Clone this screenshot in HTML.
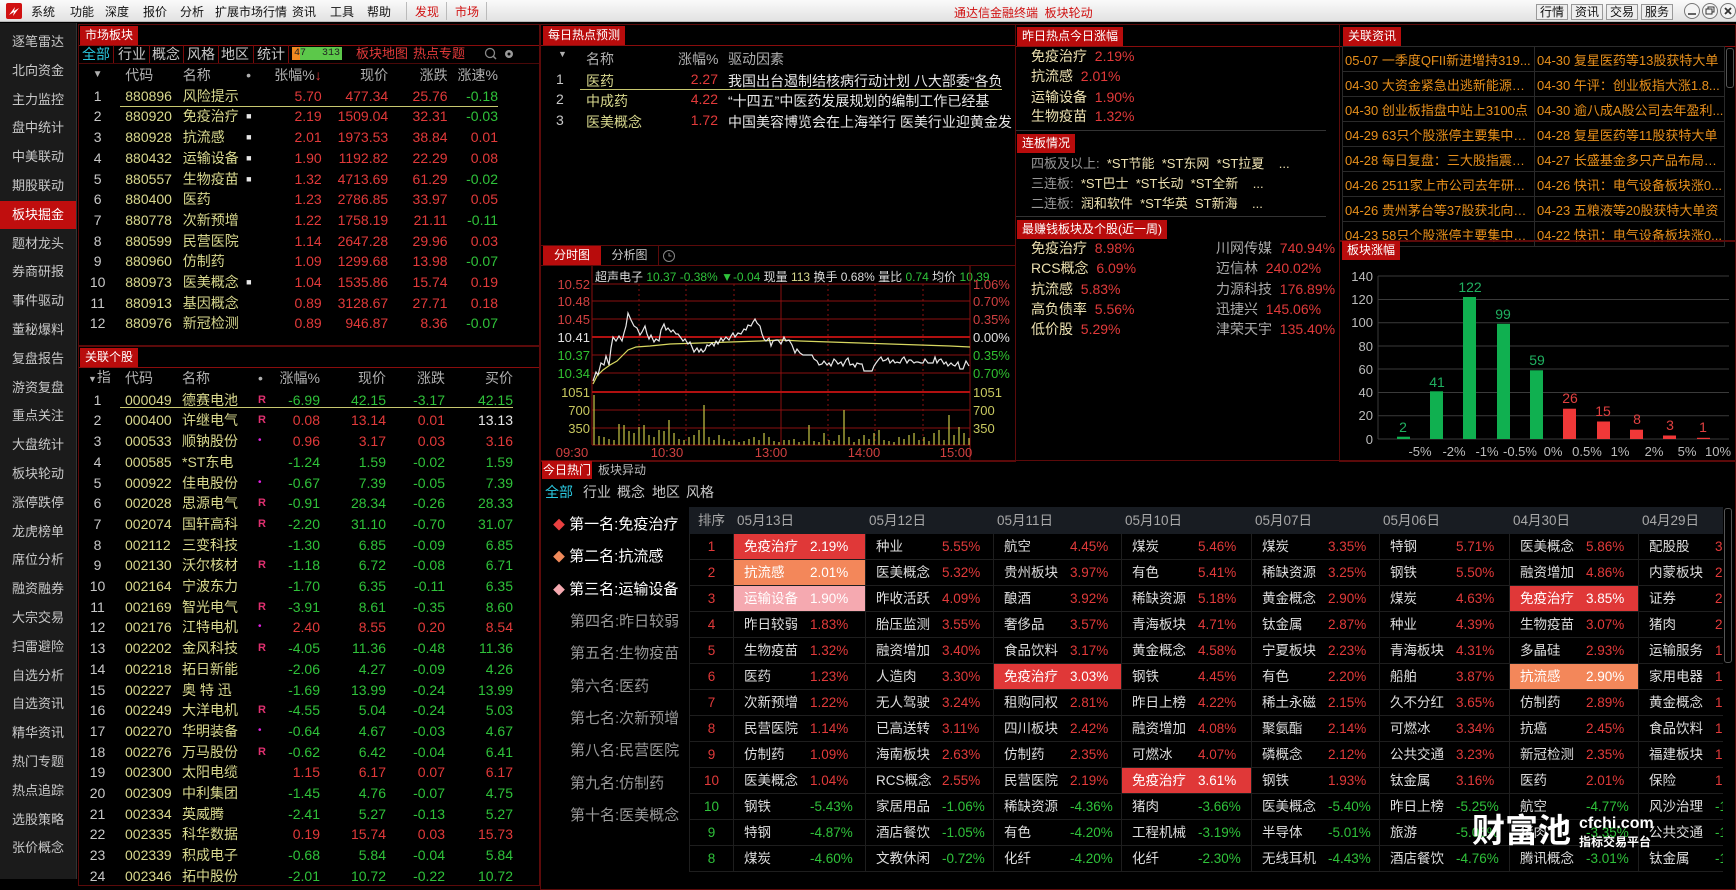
<!DOCTYPE html>
<html><head><meta charset="utf-8">
<style>
*{margin:0;padding:0;box-sizing:border-box}
body{width:1736px;height:879px;overflow:hidden;background:#000;font-family:"Liberation Sans","Noto Sans CJK SC",sans-serif;font-size:14px;color:#c8c8c8;position:relative}
.a{position:absolute;white-space:nowrap}
.r{color:#e23a3a}.g{color:#2fc23a}.k{color:#d8d88e}.w{color:#e8e8e8}.gy{color:#b0b0b0}
.tab{position:absolute;background:#b80c0c;color:#fff;font-size:12px;height:19px;line-height:19px;padding:0 5px}
.pl{position:absolute;border:1px solid #5c0a0a}
table{border-collapse:collapse;table-layout:fixed}
td{white-space:nowrap;overflow:hidden;padding:0}
.mt td{height:20.7px;line-height:20.7px;font-size:14px}
.rt{text-align:right;padding-right:2px}
.sb div{position:absolute;left:0;width:76px;text-align:center;font-size:13px;color:#c8c8c8;height:28px;line-height:28px}
.ht td{height:26px;border:1px solid #1e1e1e;font-size:13.5px;position:relative}
.ht td span{line-height:25px}
.ht td span.n{position:absolute;left:10px;top:0}
.ht td span.p{position:absolute;left:76px;top:0}
.ht tr.h td{background:#181c22;color:#a8a8a8;border-color:#181c22}
.h1{background:#e03838;color:#fff}.h2{background:#f3875a;color:#fff}.h3{background:#f5a9b0;color:#fff}
.h1 span,.h2 span,.h3 span{color:#fff!important}
.ht td.rk{text-align:center;line-height:25px}
.nw td{height:25px;border:1px solid #2a2a2a;color:#e8901c;font-size:13px;padding-left:2px;text-overflow:ellipsis}
</style></head><body>

<!-- top menu -->
<div class="a" style="left:0;top:0;width:1736px;height:22px;background:linear-gradient(#fafafa,#e2e2e2);border-bottom:1px solid #b8b8b8"></div>
<div class="a" style="left:6px;top:3px;width:16px;height:16px;background:#d01010;border-radius:2px"></div>
<svg class="a" style="left:6px;top:3px" width="16" height="16"><path d="M3 12 L9 4 L8 8 L13 5 L7 13 L8 9 Z" fill="#fff"/></svg>
<div class="a" style="top:3px;font-size:12px;color:#111;left:31px">系统</div>
<div class="a" style="top:3px;font-size:12px;color:#111;left:70px">功能</div>
<div class="a" style="top:3px;font-size:12px;color:#111;left:105px">深度</div>
<div class="a" style="top:3px;font-size:12px;color:#111;left:143px">报价</div>
<div class="a" style="top:3px;font-size:12px;color:#111;left:180px">分析</div>
<div class="a" style="top:3px;font-size:12px;color:#111;left:215px">扩展市场行情</div>
<div class="a" style="top:3px;font-size:12px;color:#111;left:292px">资讯</div>
<div class="a" style="top:3px;font-size:12px;color:#111;left:330px">工具</div>
<div class="a" style="top:3px;font-size:12px;color:#111;left:367px">帮助</div>
<div class="a" style="top:2px;left:406px;width:1px;height:18px;background:#bbb"></div>
<div class="a" style="top:3px;font-size:12px;color:#d01010;left:415px">发现</div>
<div class="a" style="top:2px;left:446px;width:1px;height:18px;background:#bbb"></div>
<div class="a" style="top:3px;font-size:12px;color:#d01010;left:455px">市场</div>
<div class="a" style="top:2px;left:486px;width:1px;height:18px;background:#bbb"></div>
<div class="a" style="top:4px;font-size:12px;color:#d01010;left:954px">通达信金融终端 &nbsp;板块轮动</div>
<div class="a" style="top:3px;left:1536px;font-size:12px;color:#111">
<span style="border:1px solid #999;padding:0 3px;margin-right:3px;background:#eee">行情</span><span style="border:1px solid #999;padding:0 3px;margin-right:3px;background:#eee">资讯</span><span style="border:1px solid #999;padding:0 3px;margin-right:3px;background:#eee">交易</span><span style="border:1px solid #999;padding:0 3px;background:#eee">服务</span></div>
<svg class="a" style="left:1684px;top:2px" width="52" height="18">
<circle cx="8" cy="9" r="7.5" fill="#f4f4f4" stroke="#777"/><path d="M4 12h8" stroke="#333" stroke-width="1.5"/>
<circle cx="26" cy="9" r="7.5" fill="#f4f4f4" stroke="#777"/><rect x="22" y="7" width="6" height="5" fill="none" stroke="#333"/><path d="M24 7V5h6v5h-2" fill="none" stroke="#333"/>
<circle cx="44" cy="9" r="7.5" fill="#f4f4f4" stroke="#777"/><path d="M41 6l6 6M47 6l-6 6" stroke="#333" stroke-width="1.8"/></svg>

<!-- sidebar -->
<div class="a sb" style="left:0;top:23px;width:77px;height:856px;background:#1b1b1b;border-right:1px solid #333">
<div style="top:5px">逐笔雷达</div><div style="top:34px">北向资金</div><div style="top:63px">主力监控</div><div style="top:91px">盘中统计</div><div style="top:120px">中美联动</div><div style="top:149px">期股联动</div><div style="top:178px;background:#c00e0e;color:#fff">板块掘金</div><div style="top:207px">题材龙头</div><div style="top:235px">券商研报</div><div style="top:264px">事件驱动</div><div style="top:293px">董秘爆料</div><div style="top:322px">复盘报告</div><div style="top:351px">游资复盘</div><div style="top:379px">重点关注</div><div style="top:408px">大盘统计</div><div style="top:437px">板块轮动</div><div style="top:466px">涨停跌停</div><div style="top:495px">龙虎榜单</div><div style="top:523px">席位分析</div><div style="top:552px">融资融券</div><div style="top:581px">大宗交易</div><div style="top:610px">扫雷避险</div><div style="top:639px">自选分析</div><div style="top:667px">自选资讯</div><div style="top:696px">精华资讯</div><div style="top:725px">热门专题</div><div style="top:754px">热点追踪</div><div style="top:783px">选股策略</div><div style="top:811px">张价概念</div>
</div>

<!-- 市场板块 -->
<div class="pl" style="left:78px;top:24px;width:462px;height:322px"></div>
<div class="tab" style="left:80px;top:26px">市场板块</div>
<div class="a" style="left:79px;top:45px;width:460px;height:1px;background:#8a0c0c"></div>
<div class="a" style="left:79px;top:63px;width:460px;height:1px;background:#4a0808"></div>
<div class="a" style="top:45px;height:18px;line-height:18px;font-size:14px;left:82px;color:#2ac8e0">全部</div>
<div class="a" style="top:45px;left:113px;width:1px;height:18px;background:#7a0a0a"></div>
<div class="a" style="top:45px;height:18px;line-height:18px;font-size:14px;left:118px">行业</div>
<div class="a" style="top:45px;left:149px;width:1px;height:18px;background:#7a0a0a"></div>
<div class="a" style="top:45px;height:18px;line-height:18px;font-size:14px;left:152px">概念</div>
<div class="a" style="top:45px;left:183px;width:1px;height:18px;background:#7a0a0a"></div>
<div class="a" style="top:45px;height:18px;line-height:18px;font-size:14px;left:187px">风格</div>
<div class="a" style="top:45px;left:218px;width:1px;height:18px;background:#7a0a0a"></div>
<div class="a" style="top:45px;height:18px;line-height:18px;font-size:14px;left:221px">地区</div>
<div class="a" style="top:45px;left:253px;width:1px;height:18px;background:#7a0a0a"></div>
<div class="a" style="top:45px;height:18px;line-height:18px;font-size:14px;left:257px">统计</div>
<div class="a" style="top:45px;left:288px;width:1px;height:18px;background:#7a0a0a"></div>
<div class="a" style="left:292px;top:47px;width:50px;height:13px;background:linear-gradient(90deg,#f08a20 0,#f08a20 8px,#5cc84a 8px);font-size:10px;line-height:13px;font-family:'Liberation Mono',monospace;color:#222"><span style="position:absolute;left:2px">47</span><span style="position:absolute;right:2px">313</span></div>
<div class="a r" style="top:45px;height:18px;line-height:18px;left:356px;font-size:13px">板块地图</div>
<div class="a r" style="top:45px;height:18px;line-height:18px;left:413px;font-size:13px">热点专题</div>
<svg class="a" style="left:484px;top:47px" width="40" height="14"><circle cx="6" cy="6" r="4.5" fill="none" stroke="#888" stroke-width="1.3"/><path d="M9 9l3 3" stroke="#888" stroke-width="1.5"/><circle cx="25" cy="7" r="4" fill="#999"/><circle cx="25" cy="7" r="1.5" fill="#000"/></svg>

<table class="a mt" style="left:80px;top:65px;width:420px">
<colgroup><col style="width:35px"><col style="width:63px"><col style="width:67px"><col style="width:17px"><col style="width:60px"><col style="width:66px"><col style="width:59px"><col style="width:50px"></colgroup>
<tr class="gy"><td style="text-align:center;font-size:10px">▼</td><td style="padding-left:10px">代码</td><td style="padding-left:4px">名称</td><td>•</td><td class="rt">张幅%<span class="r">↓</span></td><td class="rt">现价</td><td class="rt">涨跌</td><td class="rt">涨速%</td></tr>
<tr><td style="text-align:center">1</td><td class="k" style="padding-left:10px">880896</td><td class="k" style="padding-left:4px">风险提示</td><td></td><td class="rt r">5.70</td><td class="rt r">477.34</td><td class="rt r">25.76</td><td class="rt g">-0.18</td></tr>
<tr><td style="text-align:center">2</td><td class="k" style="padding-left:10px">880920</td><td class="k" style="padding-left:4px">免疫治疗</td><td class="w" style="font-size:9px">■</td><td class="rt r">2.19</td><td class="rt r">1509.04</td><td class="rt r">32.31</td><td class="rt g">-0.03</td></tr>
<tr><td style="text-align:center">3</td><td class="k" style="padding-left:10px">880928</td><td class="k" style="padding-left:4px">抗流感</td><td class="w" style="font-size:9px">■</td><td class="rt r">2.01</td><td class="rt r">1973.53</td><td class="rt r">38.84</td><td class="rt r">0.01</td></tr>
<tr><td style="text-align:center">4</td><td class="k" style="padding-left:10px">880432</td><td class="k" style="padding-left:4px">运输设备</td><td class="w" style="font-size:9px">■</td><td class="rt r">1.90</td><td class="rt r">1192.82</td><td class="rt r">22.29</td><td class="rt r">0.08</td></tr>
<tr><td style="text-align:center">5</td><td class="k" style="padding-left:10px">880557</td><td class="k" style="padding-left:4px">生物疫苗</td><td class="w" style="font-size:9px">■</td><td class="rt r">1.32</td><td class="rt r">4713.69</td><td class="rt r">61.29</td><td class="rt g">-0.02</td></tr>
<tr><td style="text-align:center">6</td><td class="k" style="padding-left:10px">880400</td><td class="k" style="padding-left:4px">医药</td><td></td><td class="rt r">1.23</td><td class="rt r">2786.85</td><td class="rt r">33.97</td><td class="rt r">0.05</td></tr>
<tr><td style="text-align:center">7</td><td class="k" style="padding-left:10px">880778</td><td class="k" style="padding-left:4px">次新预增</td><td></td><td class="rt r">1.22</td><td class="rt r">1758.19</td><td class="rt r">21.11</td><td class="rt g">-0.11</td></tr>
<tr><td style="text-align:center">8</td><td class="k" style="padding-left:10px">880599</td><td class="k" style="padding-left:4px">民营医院</td><td></td><td class="rt r">1.14</td><td class="rt r">2647.28</td><td class="rt r">29.96</td><td class="rt r">0.03</td></tr>
<tr><td style="text-align:center">9</td><td class="k" style="padding-left:10px">880960</td><td class="k" style="padding-left:4px">仿制药</td><td></td><td class="rt r">1.09</td><td class="rt r">1299.68</td><td class="rt r">13.98</td><td class="rt g">-0.07</td></tr>
<tr><td style="text-align:center">10</td><td class="k" style="padding-left:10px">880973</td><td class="k" style="padding-left:4px">医美概念</td><td class="w" style="font-size:9px">■</td><td class="rt r">1.04</td><td class="rt r">1535.86</td><td class="rt r">15.74</td><td class="rt r">0.19</td></tr>
<tr><td style="text-align:center">11</td><td class="k" style="padding-left:10px">880913</td><td class="k" style="padding-left:4px">基因概念</td><td></td><td class="rt r">0.89</td><td class="rt r">3128.67</td><td class="rt r">27.71</td><td class="rt r">0.18</td></tr>
<tr><td style="text-align:center">12</td><td class="k" style="padding-left:10px">880976</td><td class="k" style="padding-left:4px">新冠检测</td><td></td><td class="rt r">0.89</td><td class="rt r">946.87</td><td class="rt r">8.36</td><td class="rt g">-0.07</td></tr>
</table>
<div class="a" style="left:120px;top:106px;width:378px;height:1px;background:#c8c870"></div>

<!-- 关联个股 -->
<div class="pl" style="left:78px;top:346px;width:462px;height:540px"></div>
<div class="tab" style="left:80px;top:348px">关联个股</div>
<div class="a" style="left:79px;top:367px;width:460px;height:1px;background:#8a0c0c"></div>
<table class="a mt" style="left:80px;top:367px;width:435px">
<colgroup><col style="width:35px"><col style="width:63px"><col style="width:80px"><col style="width:14px"><col style="width:50px"><col style="width:66px"><col style="width:59px"><col style="width:68px"></colgroup>
<tr class="gy"><td style="font-size:14px;padding-left:8px"><span style="font-size:9px">▼</span>指</td><td style="padding-left:10px">代码</td><td style="padding-left:4px">名称</td><td>•</td><td class="rt">涨幅%</td><td class="rt">现价</td><td class="rt">涨跌</td><td class="rt">买价</td></tr>
<tr><td style="text-align:center">1</td><td class="k" style="padding-left:10px">000049</td><td class="k" style="padding-left:4px">德赛电池</td><td style="color:#e03070;font-size:11px;font-weight:bold">R</td><td class="rt g">-6.99</td><td class="rt g">42.15</td><td class="rt g">-3.17</td><td class="rt g">42.15</td></tr>
<tr><td style="text-align:center">2</td><td class="k" style="padding-left:10px">000400</td><td class="k" style="padding-left:4px">许继电气</td><td style="color:#e03070;font-size:11px;font-weight:bold">R</td><td class="rt r">0.08</td><td class="rt r">13.14</td><td class="rt r">0.01</td><td class="rt w">13.13</td></tr>
<tr><td style="text-align:center">3</td><td class="k" style="padding-left:10px">000533</td><td class="k" style="padding-left:4px">顺钠股份</td><td style="color:#e020e0;font-size:10px">•</td><td class="rt r">0.96</td><td class="rt r">3.17</td><td class="rt r">0.03</td><td class="rt r">3.16</td></tr>
<tr><td style="text-align:center">4</td><td class="k" style="padding-left:10px">000585</td><td class="k" style="padding-left:4px">*ST东电</td><td></td><td class="rt g">-1.24</td><td class="rt g">1.59</td><td class="rt g">-0.02</td><td class="rt g">1.59</td></tr>
<tr><td style="text-align:center">5</td><td class="k" style="padding-left:10px">000922</td><td class="k" style="padding-left:4px">佳电股份</td><td style="color:#e020e0;font-size:10px">•</td><td class="rt g">-0.67</td><td class="rt g">7.39</td><td class="rt g">-0.05</td><td class="rt g">7.39</td></tr>
<tr><td style="text-align:center">6</td><td class="k" style="padding-left:10px">002028</td><td class="k" style="padding-left:4px">思源电气</td><td style="color:#e03070;font-size:11px;font-weight:bold">R</td><td class="rt g">-0.91</td><td class="rt g">28.34</td><td class="rt g">-0.26</td><td class="rt g">28.33</td></tr>
<tr><td style="text-align:center">7</td><td class="k" style="padding-left:10px">002074</td><td class="k" style="padding-left:4px">国轩高科</td><td style="color:#e03070;font-size:11px;font-weight:bold">R</td><td class="rt g">-2.20</td><td class="rt g">31.10</td><td class="rt g">-0.70</td><td class="rt g">31.07</td></tr>
<tr><td style="text-align:center">8</td><td class="k" style="padding-left:10px">002112</td><td class="k" style="padding-left:4px">三变科技</td><td></td><td class="rt g">-1.30</td><td class="rt g">6.85</td><td class="rt g">-0.09</td><td class="rt g">6.85</td></tr>
<tr><td style="text-align:center">9</td><td class="k" style="padding-left:10px">002130</td><td class="k" style="padding-left:4px">沃尔核材</td><td style="color:#e03070;font-size:11px;font-weight:bold">R</td><td class="rt g">-1.18</td><td class="rt g">6.72</td><td class="rt g">-0.08</td><td class="rt g">6.71</td></tr>
<tr><td style="text-align:center">10</td><td class="k" style="padding-left:10px">002164</td><td class="k" style="padding-left:4px">宁波东力</td><td></td><td class="rt g">-1.70</td><td class="rt g">6.35</td><td class="rt g">-0.11</td><td class="rt g">6.35</td></tr>
<tr><td style="text-align:center">11</td><td class="k" style="padding-left:10px">002169</td><td class="k" style="padding-left:4px">智光电气</td><td style="color:#e03070;font-size:11px;font-weight:bold">R</td><td class="rt g">-3.91</td><td class="rt g">8.61</td><td class="rt g">-0.35</td><td class="rt g">8.60</td></tr>
<tr><td style="text-align:center">12</td><td class="k" style="padding-left:10px">002176</td><td class="k" style="padding-left:4px">江特电机</td><td style="color:#e020e0;font-size:10px">•</td><td class="rt r">2.40</td><td class="rt r">8.55</td><td class="rt r">0.20</td><td class="rt r">8.54</td></tr>
<tr><td style="text-align:center">13</td><td class="k" style="padding-left:10px">002202</td><td class="k" style="padding-left:4px">金风科技</td><td style="color:#e03070;font-size:11px;font-weight:bold">R</td><td class="rt g">-4.05</td><td class="rt g">11.36</td><td class="rt g">-0.48</td><td class="rt g">11.36</td></tr>
<tr><td style="text-align:center">14</td><td class="k" style="padding-left:10px">002218</td><td class="k" style="padding-left:4px">拓日新能</td><td></td><td class="rt g">-2.06</td><td class="rt g">4.27</td><td class="rt g">-0.09</td><td class="rt g">4.26</td></tr>
<tr><td style="text-align:center">15</td><td class="k" style="padding-left:10px">002227</td><td class="k" style="padding-left:4px">奥 特 迅</td><td></td><td class="rt g">-1.69</td><td class="rt g">13.99</td><td class="rt g">-0.24</td><td class="rt g">13.99</td></tr>
<tr><td style="text-align:center">16</td><td class="k" style="padding-left:10px">002249</td><td class="k" style="padding-left:4px">大洋电机</td><td style="color:#e03070;font-size:11px;font-weight:bold">R</td><td class="rt g">-4.55</td><td class="rt g">5.04</td><td class="rt g">-0.24</td><td class="rt g">5.03</td></tr>
<tr><td style="text-align:center">17</td><td class="k" style="padding-left:10px">002270</td><td class="k" style="padding-left:4px">华明装备</td><td style="color:#e020e0;font-size:10px">•</td><td class="rt g">-0.64</td><td class="rt g">4.67</td><td class="rt g">-0.03</td><td class="rt g">4.67</td></tr>
<tr><td style="text-align:center">18</td><td class="k" style="padding-left:10px">002276</td><td class="k" style="padding-left:4px">万马股份</td><td style="color:#e03070;font-size:11px;font-weight:bold">R</td><td class="rt g">-0.62</td><td class="rt g">6.42</td><td class="rt g">-0.04</td><td class="rt g">6.41</td></tr>
<tr><td style="text-align:center">19</td><td class="k" style="padding-left:10px">002300</td><td class="k" style="padding-left:4px">太阳电缆</td><td></td><td class="rt r">1.15</td><td class="rt r">6.17</td><td class="rt r">0.07</td><td class="rt r">6.17</td></tr>
<tr><td style="text-align:center">20</td><td class="k" style="padding-left:10px">002309</td><td class="k" style="padding-left:4px">中利集团</td><td></td><td class="rt g">-1.45</td><td class="rt g">4.76</td><td class="rt g">-0.07</td><td class="rt g">4.75</td></tr>
<tr><td style="text-align:center">21</td><td class="k" style="padding-left:10px">002334</td><td class="k" style="padding-left:4px">英威腾</td><td></td><td class="rt g">-2.41</td><td class="rt g">5.27</td><td class="rt g">-0.13</td><td class="rt g">5.27</td></tr>
<tr><td style="text-align:center">22</td><td class="k" style="padding-left:10px">002335</td><td class="k" style="padding-left:4px">科华数据</td><td></td><td class="rt r">0.19</td><td class="rt r">15.74</td><td class="rt r">0.03</td><td class="rt r">15.73</td></tr>
<tr><td style="text-align:center">23</td><td class="k" style="padding-left:10px">002339</td><td class="k" style="padding-left:4px">积成电子</td><td></td><td class="rt g">-0.68</td><td class="rt g">5.84</td><td class="rt g">-0.04</td><td class="rt g">5.84</td></tr>
<tr><td style="text-align:center">24</td><td class="k" style="padding-left:10px">002346</td><td class="k" style="padding-left:4px">拓中股份</td><td></td><td class="rt g">-2.01</td><td class="rt g">10.72</td><td class="rt g">-0.22</td><td class="rt g">10.72</td></tr>
</table>
<div class="a" style="left:120px;top:407px;width:393px;height:1px;background:#c8c870"></div>

<!-- 每日热点预测 -->
<div class="pl" style="left:540px;top:24px;width:476px;height:222px"></div>
<div class="tab" style="left:543px;top:26px">每日热点预测</div>
<div class="a" style="left:541px;top:45px;width:474px;height:1px;background:#8a0c0c"></div>
<div class="a gy" style="top:49px;left:558px;font-size:9px">▼</div>
<div class="a gy" style="top:49px;left:586px">名称</div>
<div class="a gy" style="top:49px;left:678px">涨幅%</div>
<div class="a gy" style="top:49px;left:728px">驱动因素</div>
<div class="a" style="top:71px;left:556px">1</div><div class="a k" style="top:71px;left:586px">医药</div><div class="a r" style="top:71px;left:688px;width:30px;text-align:right">2.27</div><div class="a w" style="top:71px;left:728px;width:285px;overflow:hidden">我国出台遏制结核病行动计划 八大部委“各负</div>
<div class="a" style="left:580px;top:89px;width:422px;height:1px;background:#c8c870"></div>
<div class="a" style="top:91px;left:556px">2</div><div class="a k" style="top:91px;left:586px">中成药</div><div class="a r" style="top:91px;left:688px;width:30px;text-align:right">4.22</div><div class="a w" style="top:91px;left:728px;width:285px;overflow:hidden">“十四五”中医药发展规划的编制工作已经基</div>
<div class="a" style="top:112px;left:556px">3</div><div class="a k" style="top:112px;left:586px">医美概念</div><div class="a r" style="top:112px;left:688px;width:30px;text-align:right">1.72</div><div class="a w" style="top:112px;left:728px;width:285px;overflow:hidden">中国美容博览会在上海举行 医美行业迎黄金发</div>

<!-- 分时图 -->
<div class="pl" style="left:540px;top:245px;width:476px;height:217px"></div>
<div class="a" style="left:543px;top:246px;width:58px;height:19px;background:#b80c0c;color:#fff;font-size:12px;line-height:19px;text-align:center">分时图</div>
<div class="a" style="left:601px;top:246px;width:58px;height:19px;color:#ccc;font-size:12px;line-height:19px;text-align:center;border-right:1px solid #5c0a0a">分析图</div>
<svg class="a" style="left:661px;top:248px" width="16" height="16"><circle cx="8" cy="8" r="5.5" fill="none" stroke="#888"/><path d="M8 5v3h2.5" fill="none" stroke="#888"/></svg>
<div class="a" style="left:541px;top:265px;width:474px;height:1px;background:#5c0a0a"></div>
<div class="a" style="left:595px;top:268px;font-size:12px;color:#ddd">超声电子 <span class="g">10.37 -0.38% ▼-0.04</span> 现量 <span class="k">113</span> 换手 0.68% 量比 <span class="g">0.74</span> 均价 <span class="g">10.39</span></div>
<svg class="a" style="left:540px;top:245px" width="476" height="217" font-family="Liberation Sans" font-size="13">
<g transform="translate(-540,-245)">
<g stroke="#8a1010" stroke-width="1">
<line x1="592" y1="284" x2="970" y2="284"/><line x1="592" y1="301" x2="970" y2="301"/><line x1="592" y1="319" x2="970" y2="319"/>
<line x1="592" y1="355" x2="970" y2="355"/><line x1="592" y1="373" x2="970" y2="373"/><line x1="592" y1="410" x2="970" y2="410"/><line x1="592" y1="428" x2="970" y2="428"/>
<line x1="592" y1="445" x2="970" y2="445"/><line x1="592" y1="266" x2="592" y2="445"/><line x1="970" y1="266" x2="970" y2="460"/><line x1="781" y1="284" x2="781" y2="445"/>
</g>
<g stroke="#b01010" stroke-width="2"><line x1="592" y1="337" x2="970" y2="337"/><line x1="592" y1="392" x2="970" y2="392"/></g>
<g stroke="#8a1010" stroke-dasharray="2,3"><line x1="639" y1="284" x2="639" y2="445"/><line x1="686" y1="284" x2="686" y2="445"/><line x1="734" y1="284" x2="734" y2="445"/><line x1="828" y1="284" x2="828" y2="445"/><line x1="875" y1="284" x2="875" y2="445"/><line x1="923" y1="284" x2="923" y2="445"/></g>
<path stroke="#b8b840" stroke-width="1.3" fill="none" d="M594 445V395M599 445V436M604 445V437M609 445V439M614 445V440M619 445V424M624 445V425M629 445V431M634 445V433M639 445V427M644 445V425M649 445V435M654 445V437M659 445V430M664 445V431M669 445V420M674 445V433M679 445V439M684 445V440M689 445V437M694 445V435M699 445V430M704 445V405M709 445V437M714 445V440M719 445V435M724 445V439M729 445V441M734 445V440M739 445V442M744 445V441M749 445V439M754 445V437M759 445V440M764 445V433M769 445V437M774 445V441M779 445V442M784 445V440M789 445V440M794 445V439M799 445V442M804 445V441M809 445V425M814 445V441M819 445V442M824 445V433M829 445V440M834 445V441M839 445V435M844 445V410M849 445V437M854 445V442M859 445V439M864 445V435M869 445V439M874 445V433M879 445V430M884 445V440M889 445V441M894 445V442M899 445V437M904 445V439M909 445V435M914 445V433M919 445V440M924 445V437M929 445V441M934 445V433M939 445V430M944 445V440M949 445V415M954 445V435M959 445V427M964 445V433M969 445V438"/>
<polyline fill="none" stroke="#d8d860" stroke-width="1.2" points="593,384 597,376 603,370 610,365 617,361 623,355 628,350 636,347 650,346 670,344 700,343 730,342 760,341 781,340 800,341 830,342 860,343 890,344 920,345 950,346 970,347"/>
<polyline fill="none" stroke="#e8e8e8" stroke-width="1.2" points="593,381 596,372 598,375 601,363 604,365 606,356 609,365 611,348 613,337 616,341 619,336 622,341 624,333 626,326 628,313 631,320 634,326 637,328 640,335 642,332 645,326 647,334 649,339 651,335 654,342 656,339 659,341 661,330 664,324 666,330 668,328 671,332 673,330 676,334 678,334 681,338 683,341 685,339 688,344 690,342 692,347 694,352 697,348 699,352 701,349 703,352 705,350 707,345 709,346 712,343 714,346 716,341 718,344 721,338 723,341 726,337 729,340 731,336 733,333 735,337 738,333 741,334 744,329 746,330 748,325 751,326 753,322 755,319 757,323 760,326 762,334 764,339 766,341 769,338 771,346 773,341 776,340 778,340 781,344 784,337 786,341 789,340 792,345 795,353 797,349 800,353 803,355 805,355 808,355 812,355 814,359 817,361 819,365 822,364 824,361 827,365 829,363 831,366 834,359 836,361 838,364 841,362 843,366 846,360 848,358 850,365 853,364 855,367 857,363 860,364 862,364 864,371 867,371 869,371 872,371 874,366 876,363 879,359 881,357 883,361 886,360 888,358 890,363 893,360 895,363 897,362 900,363 902,359 904,357 907,363 909,360 911,360 914,363 916,362 918,362 921,363 923,363 925,359 928,363 930,363 933,363 935,357 937,363 939,360 941,359 944,364 946,362 948,366 951,363 953,365 955,366 958,362 960,369 963,369 966,361 969,366"/>
<g text-anchor="end"><text x="590" y="289" fill="#d04040">10.52</text><text x="590" y="306" fill="#d04040">10.48</text><text x="590" y="324" fill="#d04040">10.45</text><text x="590" y="342" fill="#e0e0e0">10.41</text><text x="590" y="360" fill="#30c030">10.37</text><text x="590" y="378" fill="#30c030">10.34</text><text x="590" y="397" fill="#c8c860">1051</text><text x="590" y="415" fill="#c8c860">700</text><text x="590" y="433" fill="#c8c860">350</text></g>
<text x="973" y="289" fill="#d04040">1.06%</text><text x="973" y="306" fill="#d04040">0.70%</text><text x="973" y="324" fill="#d04040">0.35%</text><text x="973" y="342" fill="#e0e0e0">0.00%</text><text x="973" y="360" fill="#30c030">0.35%</text><text x="973" y="378" fill="#30c030">0.70%</text><text x="973" y="397" fill="#c8c860">1051</text><text x="973" y="415" fill="#c8c860">700</text><text x="973" y="433" fill="#c8c860">350</text>
<g fill="#d04040" text-anchor="middle"><text x="572" y="457">09:30</text><text x="667" y="457">10:30</text><text x="771" y="457">13:00</text><text x="864" y="457">14:00</text><text x="956" y="457">15:00</text></g>
</g></svg>

<!-- 昨日热点 panel -->
<div class="pl" style="left:1015px;top:24px;width:325px;height:437px"></div>
<div class="tab" style="left:1017px;top:27px">昨日热点今日涨幅</div>
<div class="a" style="left:1016px;top:46px;width:323px;height:1px;background:#8a0c0c"></div>
<div class="a" style="top:46px;left:1031px;color:#ece0b0">免疫治疗 <span class="r">&nbsp;2.19%</span></div>
<div class="a" style="top:66px;left:1031px;color:#ece0b0">抗流感 <span class="r">&nbsp;2.01%</span></div>
<div class="a" style="top:87px;left:1031px;color:#ece0b0">运输设备 <span class="r">&nbsp;1.90%</span></div>
<div class="a" style="top:106px;left:1031px;color:#ece0b0">生物疫苗 <span class="r">&nbsp;1.32%</span></div>
<div class="a" style="left:1016px;top:130px;width:310px;height:1px;background:#333"></div>
<div class="tab" style="left:1017px;top:134px">连板情况</div>
<div class="a" style="top:153px;left:1031px;font-size:13px;color:#999">四板及以上: <span style="color:#ece0b0">&nbsp;*ST节能 &nbsp;*ST东网 &nbsp;*ST拉夏 &nbsp;&nbsp;&nbsp;...</span></div>
<div class="a" style="top:173px;left:1031px;font-size:13px;color:#999">三连板: <span style="color:#ece0b0">&nbsp;*ST巴士 &nbsp;*ST长动 &nbsp;*ST全新 &nbsp;&nbsp;&nbsp;...</span></div>
<div class="a" style="top:193px;left:1031px;font-size:13px;color:#999">二连板: <span style="color:#ece0b0">&nbsp;润和软件 &nbsp;*ST华英 &nbsp;ST新海 &nbsp;&nbsp;&nbsp;...</span></div>
<div class="a" style="left:1016px;top:216px;width:310px;height:1px;background:#333"></div>
<div class="tab" style="left:1017px;top:220px">最赚钱板块及个股(近一周)</div>
<div class="a" style="top:238px;left:1031px;color:#ece0b0">免疫治疗 <span class="r">&nbsp;8.98%</span></div>
<div class="a" style="top:258px;left:1031px;color:#ece0b0">RCS概念 <span class="r">&nbsp;6.09%</span></div>
<div class="a" style="top:279px;left:1031px;color:#ece0b0">抗流感 <span class="r">&nbsp;5.83%</span></div>
<div class="a" style="top:299px;left:1031px;color:#ece0b0">高负债率 <span class="r">&nbsp;5.56%</span></div>
<div class="a" style="top:319px;left:1031px;color:#ece0b0">低价股 <span class="r">&nbsp;5.29%</span></div>
<div class="a" style="top:238px;left:1216px;color:#aaa">川网传媒 <span class="r">&nbsp;740.94%</span></div>
<div class="a" style="top:258px;left:1216px;color:#aaa">迈信林 <span class="r">&nbsp;240.02%</span></div>
<div class="a" style="top:279px;left:1216px;color:#aaa">力源科技 <span class="r">&nbsp;176.89%</span></div>
<div class="a" style="top:299px;left:1216px;color:#aaa">迅捷兴 <span class="r">&nbsp;145.06%</span></div>
<div class="a" style="top:319px;left:1216px;color:#aaa">津荣天宇 <span class="r">&nbsp;135.40%</span></div>

<!-- 关联资讯 -->
<div class="pl" style="left:1339px;top:24px;width:397px;height:218px"></div>
<div class="tab" style="left:1343px;top:27px">关联资讯</div>
<div class="a" style="left:1340px;top:46px;width:396px;height:1px;background:#8a0c0c"></div>
<table class="a nw" style="left:1342px;top:46px;width:382px">
<colgroup><col style="width:192px"><col style="width:190px"></colgroup>
<tr><td>05-07 一季度QFII新进增持319...</td><td>04-30 复星医药等13股获特大单</td></tr>
<tr><td>04-30 大资金紧急出逃新能源车...</td><td>04-30 午评：创业板指大涨1.8...</td></tr>
<tr><td>04-30 创业板指盘中站上3100点</td><td>04-30 逾八成A股公司去年盈利...</td></tr>
<tr><td>04-29 63只个股涨停主要集中在...</td><td>04-28 复星医药等11股获特大单</td></tr>
<tr><td>04-28 每日复盘：三大股指震荡...</td><td>04-27 长盛基金多只产品布局医...</td></tr>
<tr><td>04-26 2511家上市公司去年研...</td><td>04-26 快讯：电气设备板块涨0...</td></tr>
<tr><td>04-26 贵州茅台等37股获北向资...</td><td>04-23 五粮液等20股获特大单资</td></tr>
<tr><td>04-23 58只个股涨停主要集中在...</td><td>04-22 快讯：电气设备板块涨0...</td></tr>
</table>
<div class="a" style="left:1726px;top:48px;width:8px;height:40px;border:1px solid #555;border-radius:3px"></div>

<!-- 板块涨幅 -->
<div class="pl" style="left:1339px;top:240px;width:397px;height:222px"></div>
<div class="tab" style="left:1342px;top:241px">板块涨幅</div>
<svg class="a" style="left:1340px;top:240px" width="396" height="222" font-family="Liberation Sans" font-size="13">
<g transform="translate(-1340,-240)">
<g stroke="#3a3a3a"><line x1="1378" y1="276" x2="1729" y2="276"/><line x1="1378" y1="299.5" x2="1729" y2="299.5"/><line x1="1378" y1="322.7" x2="1729" y2="322.7"/><line x1="1378" y1="346" x2="1729" y2="346"/><line x1="1378" y1="369" x2="1729" y2="369"/><line x1="1378" y1="392.5" x2="1729" y2="392.5"/><line x1="1378" y1="415.7" x2="1729" y2="415.7"/><line x1="1378" y1="439" x2="1729" y2="439"/><line x1="1378" y1="276" x2="1378" y2="439"/></g>
<g fill="#bbb" text-anchor="end"><text x="1373" y="281">140</text><text x="1373" y="304">120</text><text x="1373" y="327">100</text><text x="1373" y="351">80</text><text x="1373" y="374">60</text><text x="1373" y="397">40</text><text x="1373" y="420">20</text><text x="1373" y="444">0</text></g>
<g fill="#10b050"><rect x="1397" y="436.7" width="13" height="2.3"/><rect x="1430" y="391.3" width="13" height="47.7"/><rect x="1463" y="297" width="13" height="142"/><rect x="1497" y="323.8" width="13" height="115.2"/><rect x="1530" y="370.3" width="13" height="68.7"/></g>
<g fill="#f03838"><rect x="1563" y="408.7" width="13" height="30.3"/><rect x="1597" y="421.5" width="13" height="17.5"/><rect x="1630" y="429.7" width="13" height="9.3"/><rect x="1663" y="435.5" width="13" height="3.5"/><rect x="1697" y="437.8" width="13" height="1.2"/></g>
<g text-anchor="middle" font-size="14"><g fill="#20b060"><text x="1403" y="432">2</text><text x="1437" y="387">41</text><text x="1470" y="292">122</text><text x="1503" y="319">99</text><text x="1537" y="365">59</text></g><g fill="#e04040"><text x="1570" y="403">26</text><text x="1603" y="416">15</text><text x="1637" y="424">8</text><text x="1670" y="430">3</text><text x="1703" y="432">1</text></g></g>
<g fill="#bbb" text-anchor="middle"><text x="1420" y="456">-5%</text><text x="1454" y="456">-2%</text><text x="1487" y="456">-1%</text><text x="1520" y="456">-0.5%</text><text x="1553" y="456">0%</text><text x="1587" y="456">0.5%</text><text x="1620" y="456">1%</text><text x="1654" y="456">2%</text><text x="1687" y="456">5%</text><text x="1718" y="456">10%</text></g>
</g></svg>

<!-- 今日热门 -->
<div class="pl" style="left:540px;top:460px;width:1196px;height:430px"></div>
<div class="tab" style="left:542px;top:461px;height:18px;line-height:18px;padding:0 1px">今日热门</div>
<div class="a" style="left:598px;top:461px;font-size:12px;color:#bbb;line-height:18px">板块异动</div>
<div class="a" style="top:482px;left:545px;color:#2ac8e0">全部</div>
<div class="a" style="top:482px;left:583px">行业</div>
<div class="a" style="top:482px;left:617px">概念</div>
<div class="a" style="top:482px;left:652px">地区</div>
<div class="a" style="top:482px;left:686px">风格</div>
<div class="a" style="top:513px;left:553px;font-size:15px;color:#fff"><span style="color:#e84040;font-size:12px">◆</span> 第一名:免疫治疗</div>
<div class="a" style="top:545px;left:553px;font-size:15px;color:#fff"><span style="color:#f08a5a;font-size:12px">◆</span> 第二名:抗流感</div>
<div class="a" style="top:578px;left:553px;font-size:15px;color:#fff"><span style="color:#f5a9b0;font-size:12px">◆</span> 第三名:运输设备</div>
<div class="a" style="top:610px;left:570px;font-size:15px;color:#999">第四名:昨日较弱</div>
<div class="a" style="top:642px;left:570px;font-size:15px;color:#999">第五名:生物疫苗</div>
<div class="a" style="top:675px;left:570px;font-size:15px;color:#999">第六名:医药</div>
<div class="a" style="top:707px;left:570px;font-size:15px;color:#999">第七名:次新预增</div>
<div class="a" style="top:739px;left:570px;font-size:15px;color:#999">第八名:民营医院</div>
<div class="a" style="top:772px;left:570px;font-size:15px;color:#999">第九名:仿制药</div>
<div class="a" style="top:804px;left:570px;font-size:15px;color:#999">第十名:医美概念</div>

<div class="a" style="left:689px;top:507px;width:1034px;height:372px;overflow:hidden">
<table class="ht" style="width:1073px;color:#ddd">
<colgroup><col style="width:44px"><col style="width:132px"><col style="width:128px"><col style="width:128px"><col style="width:130px"><col style="width:128px"><col style="width:130px"><col style="width:129px"><col style="width:124px"></colgroup>
<tr class="h"><td class="rk">排序</td><td><span class="n" style="left:3px">05月13日</span></td><td><span class="n" style="left:3px">05月12日</span></td><td><span class="n" style="left:3px">05月11日</span></td><td><span class="n" style="left:3px">05月10日</span></td><td><span class="n" style="left:3px">05月07日</span></td><td><span class="n" style="left:3px">05月06日</span></td><td><span class="n" style="left:3px">04月30日</span></td><td><span class="n" style="left:3px">04月29日</span></td></tr>
<tr><td class="rk r">1</td><td class="h1"><span class="n">免疫治疗</span><span class="p">2.19%</span></td><td><span class="n">种业</span><span class="p r">5.55%</span></td><td><span class="n">航空</span><span class="p r">4.45%</span></td><td><span class="n">煤炭</span><span class="p r">5.46%</span></td><td><span class="n">煤炭</span><span class="p r">3.35%</span></td><td><span class="n">特钢</span><span class="p r">5.71%</span></td><td><span class="n">医美概念</span><span class="p r">5.86%</span></td><td><span class="n">配股股</span><span class="p r">3.</span></td></tr>
<tr><td class="rk r">2</td><td class="h2"><span class="n">抗流感</span><span class="p">2.01%</span></td><td><span class="n">医美概念</span><span class="p r">5.32%</span></td><td><span class="n">贵州板块</span><span class="p r">3.97%</span></td><td><span class="n">有色</span><span class="p r">5.41%</span></td><td><span class="n">稀缺资源</span><span class="p r">3.25%</span></td><td><span class="n">钢铁</span><span class="p r">5.50%</span></td><td><span class="n">融资增加</span><span class="p r">4.86%</span></td><td><span class="n">内蒙板块</span><span class="p r">2.</span></td></tr>
<tr><td class="rk r">3</td><td class="h3"><span class="n">运输设备</span><span class="p">1.90%</span></td><td><span class="n">昨收活跃</span><span class="p r">4.09%</span></td><td><span class="n">酿酒</span><span class="p r">3.92%</span></td><td><span class="n">稀缺资源</span><span class="p r">5.18%</span></td><td><span class="n">黄金概念</span><span class="p r">2.90%</span></td><td><span class="n">煤炭</span><span class="p r">4.63%</span></td><td class="h1"><span class="n">免疫治疗</span><span class="p">3.85%</span></td><td><span class="n">证券</span><span class="p r">2.</span></td></tr>
<tr><td class="rk r">4</td><td><span class="n">昨日较弱</span><span class="p r">1.83%</span></td><td><span class="n">胎压监测</span><span class="p r">3.55%</span></td><td><span class="n">奢侈品</span><span class="p r">3.57%</span></td><td><span class="n">青海板块</span><span class="p r">4.71%</span></td><td><span class="n">钛金属</span><span class="p r">2.87%</span></td><td><span class="n">种业</span><span class="p r">4.39%</span></td><td><span class="n">生物疫苗</span><span class="p r">3.07%</span></td><td><span class="n">猪肉</span><span class="p r">2.</span></td></tr>
<tr><td class="rk r">5</td><td><span class="n">生物疫苗</span><span class="p r">1.32%</span></td><td><span class="n">融资增加</span><span class="p r">3.40%</span></td><td><span class="n">食品饮料</span><span class="p r">3.17%</span></td><td><span class="n">黄金概念</span><span class="p r">4.58%</span></td><td><span class="n">宁夏板块</span><span class="p r">2.23%</span></td><td><span class="n">青海板块</span><span class="p r">4.31%</span></td><td><span class="n">多晶硅</span><span class="p r">2.93%</span></td><td><span class="n">运输服务</span><span class="p r">1.</span></td></tr>
<tr><td class="rk r">6</td><td><span class="n">医药</span><span class="p r">1.23%</span></td><td><span class="n">人造肉</span><span class="p r">3.30%</span></td><td class="h1"><span class="n">免疫治疗</span><span class="p">3.03%</span></td><td><span class="n">钢铁</span><span class="p r">4.45%</span></td><td><span class="n">有色</span><span class="p r">2.20%</span></td><td><span class="n">船舶</span><span class="p r">3.87%</span></td><td class="h2"><span class="n">抗流感</span><span class="p">2.90%</span></td><td><span class="n">家用电器</span><span class="p r">1.</span></td></tr>
<tr><td class="rk r">7</td><td><span class="n">次新预增</span><span class="p r">1.22%</span></td><td><span class="n">无人驾驶</span><span class="p r">3.24%</span></td><td><span class="n">租购同权</span><span class="p r">2.81%</span></td><td><span class="n">昨日上榜</span><span class="p r">4.22%</span></td><td><span class="n">稀土永磁</span><span class="p r">2.15%</span></td><td><span class="n">久不分红</span><span class="p r">3.65%</span></td><td><span class="n">仿制药</span><span class="p r">2.89%</span></td><td><span class="n">黄金概念</span><span class="p r">1.</span></td></tr>
<tr><td class="rk r">8</td><td><span class="n">民营医院</span><span class="p r">1.14%</span></td><td><span class="n">已高送转</span><span class="p r">3.11%</span></td><td><span class="n">四川板块</span><span class="p r">2.42%</span></td><td><span class="n">融资增加</span><span class="p r">4.08%</span></td><td><span class="n">聚氨酯</span><span class="p r">2.14%</span></td><td><span class="n">可燃冰</span><span class="p r">3.34%</span></td><td><span class="n">抗癌</span><span class="p r">2.45%</span></td><td><span class="n">食品饮料</span><span class="p r">1.</span></td></tr>
<tr><td class="rk r">9</td><td><span class="n">仿制药</span><span class="p r">1.09%</span></td><td><span class="n">海南板块</span><span class="p r">2.63%</span></td><td><span class="n">仿制药</span><span class="p r">2.35%</span></td><td><span class="n">可燃冰</span><span class="p r">4.07%</span></td><td><span class="n">磷概念</span><span class="p r">2.12%</span></td><td><span class="n">公共交通</span><span class="p r">3.23%</span></td><td><span class="n">新冠检测</span><span class="p r">2.35%</span></td><td><span class="n">福建板块</span><span class="p r">1.</span></td></tr>
<tr><td class="rk r">10</td><td><span class="n">医美概念</span><span class="p r">1.04%</span></td><td><span class="n">RCS概念</span><span class="p r">2.55%</span></td><td><span class="n">民营医院</span><span class="p r">2.19%</span></td><td class="h1"><span class="n">免疫治疗</span><span class="p">3.61%</span></td><td><span class="n">钢铁</span><span class="p r">1.93%</span></td><td><span class="n">钛金属</span><span class="p r">3.16%</span></td><td><span class="n">医药</span><span class="p r">2.01%</span></td><td><span class="n">保险</span><span class="p r">1.</span></td></tr>
<tr><td class="rk g">10</td><td><span class="n">钢铁</span><span class="p g">-5.43%</span></td><td><span class="n">家居用品</span><span class="p g">-1.06%</span></td><td><span class="n">稀缺资源</span><span class="p g">-4.36%</span></td><td><span class="n">猪肉</span><span class="p g">-3.66%</span></td><td><span class="n">医美概念</span><span class="p g">-5.40%</span></td><td><span class="n">昨日上榜</span><span class="p g">-5.25%</span></td><td><span class="n">航空</span><span class="p g">-4.77%</span></td><td><span class="n">风沙治理</span><span class="p g">-1</span></td></tr>
<tr><td class="rk g">9</td><td><span class="n">特钢</span><span class="p g">-4.87%</span></td><td><span class="n">酒店餐饮</span><span class="p g">-1.05%</span></td><td><span class="n">有色</span><span class="p g">-4.20%</span></td><td><span class="n">工程机械</span><span class="p g">-3.19%</span></td><td><span class="n">半导体</span><span class="p g">-5.01%</span></td><td><span class="n">旅游</span><span class="p g">-5.06%</span></td><td><span class="n">猪肉</span><span class="p g">-3.35%</span></td><td><span class="n">公共交通</span><span class="p g">-1</span></td></tr>
<tr><td class="rk g">8</td><td><span class="n">煤炭</span><span class="p g">-4.60%</span></td><td><span class="n">文教休闲</span><span class="p g">-0.72%</span></td><td><span class="n">化纤</span><span class="p g">-4.20%</span></td><td><span class="n">化纤</span><span class="p g">-2.30%</span></td><td><span class="n">无线耳机</span><span class="p g">-4.43%</span></td><td><span class="n">酒店餐饮</span><span class="p g">-4.76%</span></td><td><span class="n">腾讯概念</span><span class="p g">-3.01%</span></td><td><span class="n">钛金属</span><span class="p g">-1</span></td></tr>
</table></div>
<div class="a" style="left:1724px;top:508px;width:8px;height:155px;border:1px solid #555;border-radius:3px"></div>

<!-- watermark -->
<div class="a" style="left:1472px;top:812px;font-size:33px;font-weight:bold;color:#fff;line-height:38px">财富池</div>
<div class="a" style="left:1579px;top:815px;font-size:16px;font-weight:bold;color:#fff;line-height:18px">cfchi.com</div>
<div class="a" style="left:1579px;top:834px;font-size:12px;font-weight:bold;color:#fff;line-height:16px">指标交易平台</div>
</body></html>
